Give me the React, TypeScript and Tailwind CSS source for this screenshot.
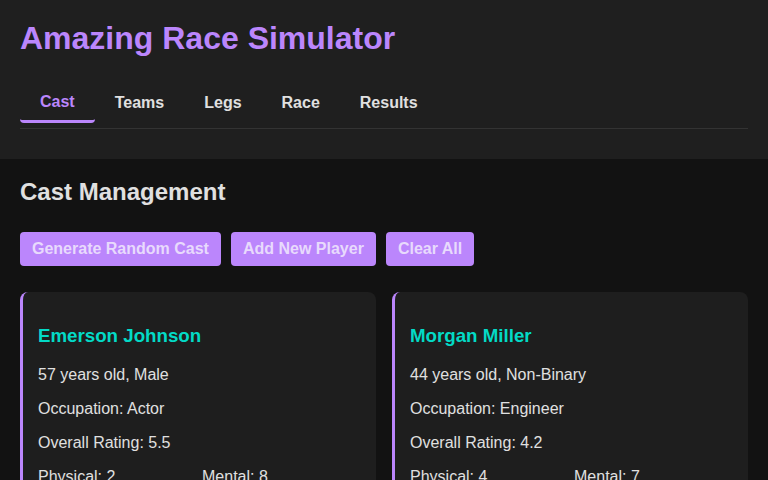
import React from "react";

const tabs = ["Cast", "Teams", "Legs", "Race", "Results"];

const players = [
  { name: "Emerson Johnson", age: 57, gender: "Male", job: "Actor", rating: "5.5", physical: 2, mental: 8 },
  { name: "Morgan Miller", age: 44, gender: "Non-Binary", job: "Engineer", rating: "4.2", physical: 4, mental: 7 },
];

export default function App() {
  return (
    <div className="min-h-screen bg-[#121212] text-[#e0e0e0] font-['Liberation_Sans',Arial,sans-serif]">
      <header className="bg-[#1f1f1f] px-5 pt-5 pb-[30px]">
        <h1 className="text-[32px] font-bold leading-[37px] text-[#bb86fc] mb-[27px]">
          Amazing Race Simulator
        </h1>
        <nav className="flex border-b border-[#333] pb-[5px]">
          {tabs.map((tab, i) => (
            <button
              key={tab}
              className={
                i === 0
                  ? "px-5 pt-[9px] pb-[9px] text-base font-bold leading-[18px] text-[#bb86fc] border-b-[3px] border-[#bb86fc] rounded-[4px]"
                  : "px-5 pt-[10px] pb-[8px] text-base font-bold leading-[18px] text-[#e0e0e0] border-b-[3px] border-transparent"
              }
            >
              {tab}
            </button>
          ))}
        </nav>
      </header>

      <main className="px-5 pt-[19px]">
        <h2 className="text-2xl font-bold leading-[28px] text-[#e0e0e0] mb-[26px]">
          Cast Management
        </h2>
        <div className="flex gap-[10px] mb-[26px]">
          {["Generate Random Cast", "Add New Player", "Clear All"].map((label) => (
            <button
              key={label}
              className="px-3 py-2 rounded-[4px] bg-[#bb86fc] text-[#e8dafc] text-base font-bold leading-[18px]"
            >
              {label}
            </button>
          ))}
        </div>

        <div className="grid grid-cols-2 gap-4">
          {players.map((p) => (
            <div
              key={p.name}
              className="bg-[#1e1e1e] rounded-lg border-l-[3px] border-[#bb86fc] px-[15px] pt-[33px] pb-[15px]"
            >
              <h3 className="text-[18.72px] font-bold leading-[21.5px] text-[#03dac6] mb-[19px]">
                {p.name}
              </h3>
              <p className="text-base leading-[18px] mb-4">
                {p.age} years old, {p.gender}
              </p>
              <p className="text-base leading-[18px] mb-4">Occupation: {p.job}</p>
              <p className="text-base leading-[18px] mb-4">Overall Rating: {p.rating}</p>
              <div className="grid grid-cols-2 gap-[5px]">
                <p className="text-base leading-[18px]">Physical: {p.physical}</p>
                <p className="text-base leading-[18px]">Mental: {p.mental}</p>
              </div>
            </div>
          ))}
        </div>
      </main>
    </div>
  );
}
